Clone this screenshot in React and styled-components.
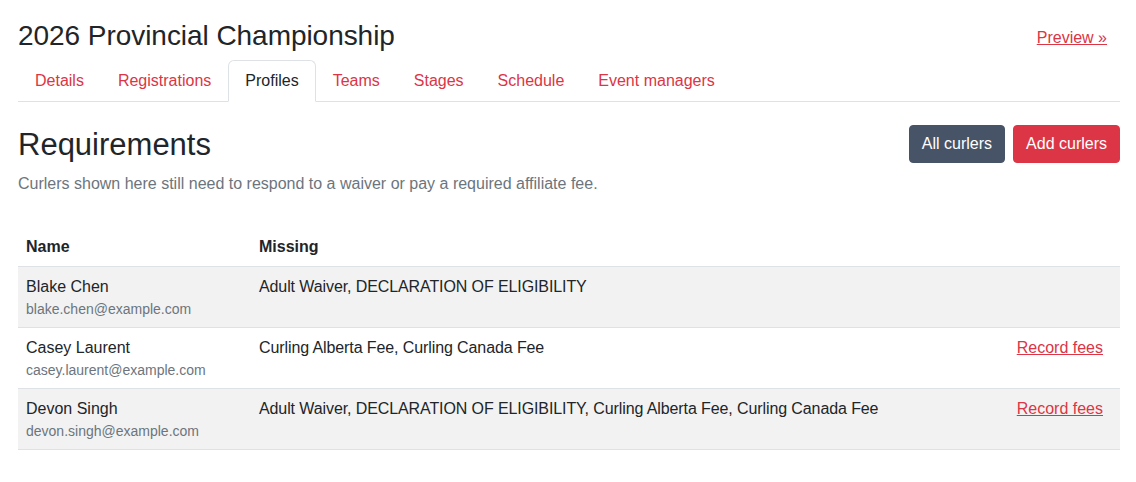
import React from "react";
import styled, { createGlobalStyle } from "styled-components";

const Global = createGlobalStyle`
  * { box-sizing: border-box; }
  body {
    margin: 0;
    background: #fff;
    color: #212529;
    font-family: "Liberation Sans", Arial, sans-serif;
    font-size: 16px;
    line-height: 1.5;
  }
`;

const Page = styled.div`
  padding: 19px 16px 30px 18px;
`;

const TitleBar = styled.div`
  display: flex;
  justify-content: space-between;
  align-items: center;
  margin-bottom: 7px;
`;

const Title = styled.h1`
  margin: 0;
  font-size: 28px;
  font-weight: 500;
  line-height: 1.2;
  letter-spacing: -0.05px;
`;

const TextLink = styled.a`
  color: #dc3545;
  text-decoration: underline;
  cursor: pointer;
  padding-right: ${(p) => p.$pr || 0}px;
  padding-top: ${(p) => p.$pt || 0}px;
`;

const Tabs = styled.ul`
  display: flex;
  list-style: none;
  margin: 0;
  padding: 0;
  border-bottom: 1px solid #dee2e6;
`;

const Tab = styled.li`
  margin-bottom: -1px;
  padding: 8px 16px;
  border: 1px solid ${(p) => (p.$active ? "#dee2e6" : "transparent")};
  border-bottom-color: ${(p) => (p.$active ? "#fff" : "transparent")};
  border-radius: 6px 6px 0 0;
  background: ${(p) => (p.$active ? "#fff" : "transparent")};
  color: ${(p) => (p.$active ? "#212529" : "#dc3545")};
  cursor: pointer;
`;

const HeadingRow = styled.div`
  display: flex;
  justify-content: space-between;
  align-items: center;
  margin-top: 23px;
  margin-bottom: 8px;
`;

const Heading = styled.h2`
  margin: 0;
  font-size: 31px;
  font-weight: 500;
  line-height: 1.24;
  padding-top: 1px;
`;

const ButtonGroup = styled.div`
  display: flex;
  gap: 8px;
`;

const Button = styled.button`
  font-family: inherit;
  font-size: 16px;
  line-height: 1.5;
  padding: 6px 12px;
  border: 1px solid ${(p) => p.$bg};
  border-radius: 4px;
  background: ${(p) => p.$bg};
  color: #fff;
  cursor: pointer;
`;

const Lead = styled.p`
  margin: 0 0 31px;
  color: #6c757d;
`;

const Table = styled.table`
  width: 100%;
  border-collapse: collapse;
`;

const Th = styled.th`
  text-align: left;
  font-weight: 700;
  padding: 8px 8px 7px;
  border-bottom: 1px solid #dee2e6;
  width: ${(p) => p.$w || "auto"};
`;

const Row = styled.tr`
  background: ${(p) => (p.$striped ? "#f2f2f2" : "#fff")};
  border-bottom: 1px solid #dee2e6;
`;

const Td = styled.td`
  padding: 8px ${(p) => (p.$right ? "17px" : "8px")} 8px 8px;
  vertical-align: top;
  text-align: ${(p) => (p.$right ? "right" : "left")};
`;

const Missing = styled(Td)`
  letter-spacing: -0.1px;
`;

const Email = styled.div`
  font-size: 14px;
  line-height: 20px;
  color: #6c757d;
`;

const tabs = ["Details", "Registrations", "Profiles", "Teams", "Stages", "Schedule", "Event managers"];

const rows = [
  { name: "Blake Chen", email: "blake.chen@example.com", missing: "Adult Waiver, DECLARATION OF ELIGIBILITY", fees: false },
  { name: "Casey Laurent", email: "casey.laurent@example.com", missing: "Curling Alberta Fee, Curling Canada Fee", fees: true },
  { name: "Devon Singh", email: "devon.singh@example.com", missing: "Adult Waiver, DECLARATION OF ELIGIBILITY, Curling Alberta Fee, Curling Canada Fee", fees: true },
];

export default function App() {
  return (
    <Page>
      <Global />
      <TitleBar>
        <Title>2026 Provincial Championship</Title>
        <TextLink $pr={13} $pt={4}>Preview »</TextLink>
      </TitleBar>
      <Tabs>
        {tabs.map((t) => (
          <Tab key={t} $active={t === "Profiles"}>{t}</Tab>
        ))}
      </Tabs>
      <HeadingRow>
        <Heading>Requirements</Heading>
        <ButtonGroup>
          <Button $bg="#475467">All curlers</Button>
          <Button $bg="#dc3545">Add curlers</Button>
        </ButtonGroup>
      </HeadingRow>
      <Lead>Curlers shown here still need to respond to a waiver or pay a required affiliate fee.</Lead>
      <Table>
        <thead>
          <tr>
            <Th $w="233px">Name</Th>
            <Th>Missing</Th>
            <Th />
          </tr>
        </thead>
        <tbody>
          {rows.map((r, i) => (
            <Row key={r.name} $striped={i % 2 === 0}>
              <Td>
                <div>{r.name}</div>
                <Email>{r.email}</Email>
              </Td>
              <Missing>{r.missing}</Missing>
              <Td $right>{r.fees && <TextLink>Record fees</TextLink>}</Td>
            </Row>
          ))}
        </tbody>
      </Table>
    </Page>
  );
}
